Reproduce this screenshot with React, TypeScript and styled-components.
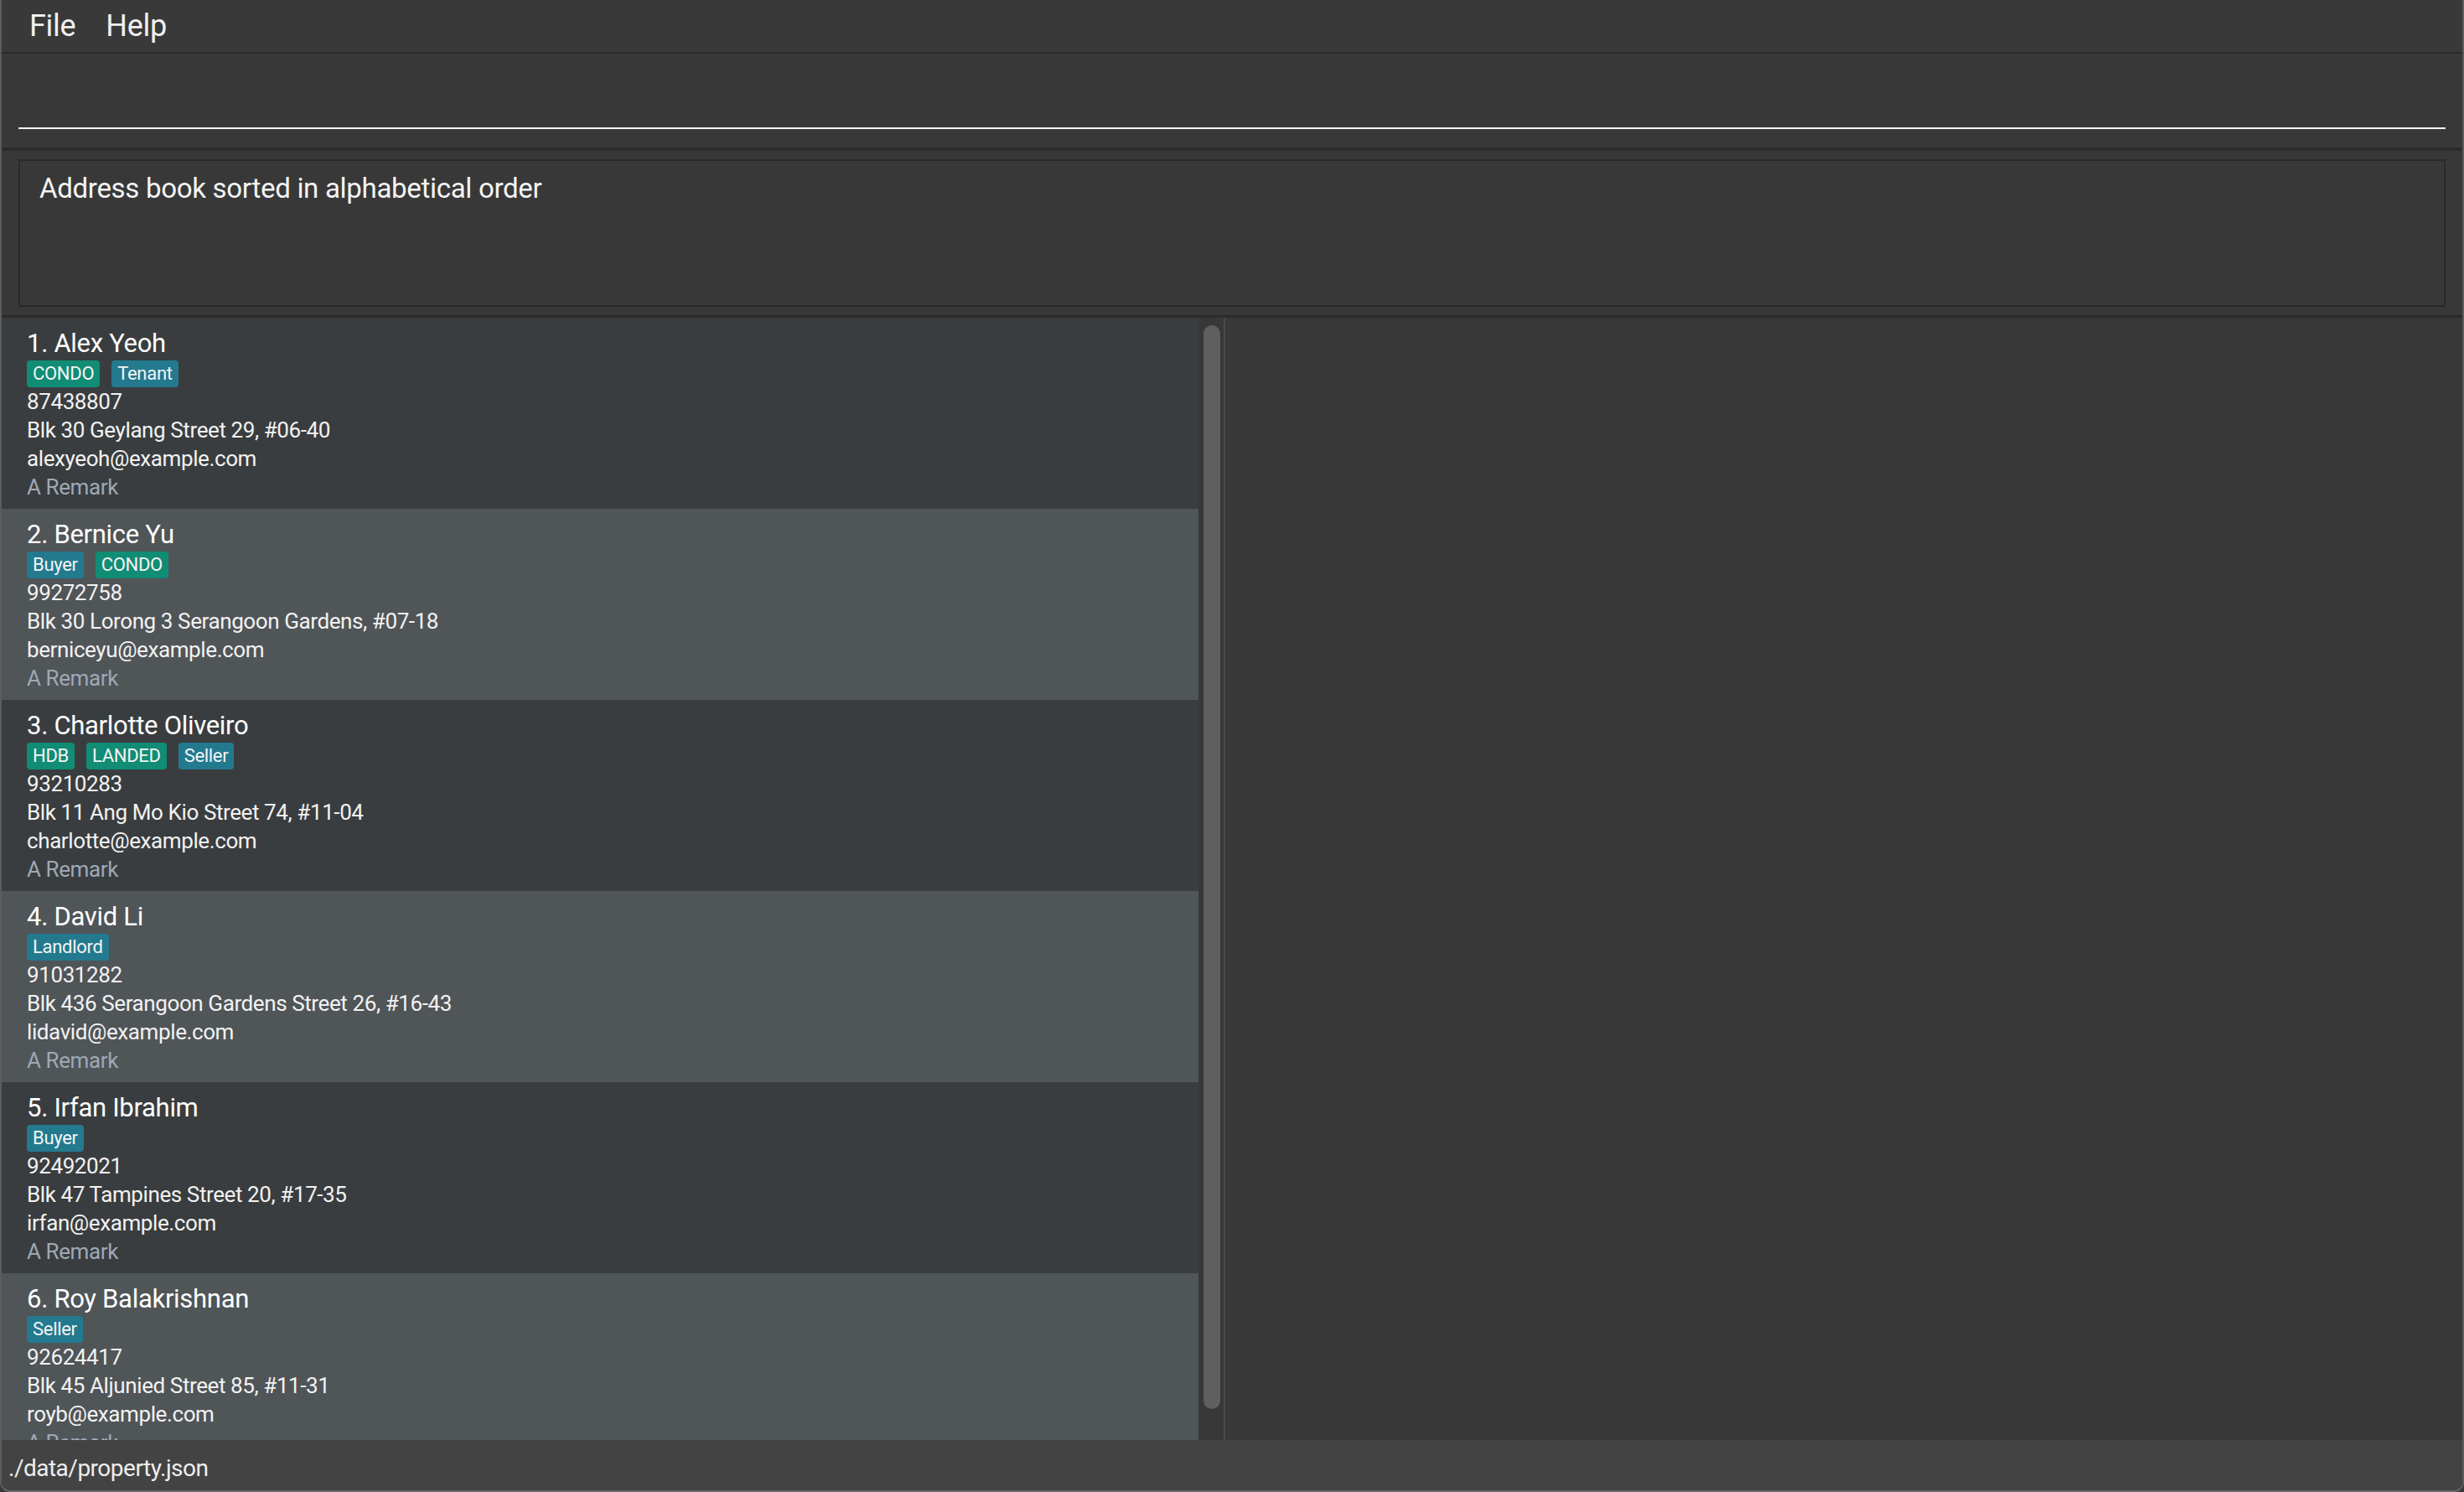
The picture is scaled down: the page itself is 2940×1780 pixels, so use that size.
import { createGlobalStyle, styled } from 'styled-components'

type TagKind = 'property' | 'role'

interface Person {
    name: string
    tags: { label: string; kind: TagKind }[]
    phone: string
    address: string
    email: string
    remark: string
}

const people: Person[] = [
    {
        name: 'Alex Yeoh',
        tags: [{ label: 'CONDO', kind: 'property' }, { label: 'Tenant', kind: 'role' }],
        phone: '87438807',
        address: 'Blk 30 Geylang Street 29, #06-40',
        email: 'alexyeoh@example.com',
        remark: 'A Remark',
    },
    {
        name: 'Bernice Yu',
        tags: [{ label: 'Buyer', kind: 'role' }, { label: 'CONDO', kind: 'property' }],
        phone: '99272758',
        address: 'Blk 30 Lorong 3 Serangoon Gardens, #07-18',
        email: 'berniceyu@example.com',
        remark: 'A Remark',
    },
    {
        name: 'Charlotte Oliveiro',
        tags: [
            { label: 'HDB', kind: 'property' },
            { label: 'LANDED', kind: 'property' },
            { label: 'Seller', kind: 'role' },
        ],
        phone: '93210283',
        address: 'Blk 11 Ang Mo Kio Street 74, #11-04',
        email: 'charlotte@example.com',
        remark: 'A Remark',
    },
    {
        name: 'David Li',
        tags: [{ label: 'Landlord', kind: 'role' }],
        phone: '91031282',
        address: 'Blk 436 Serangoon Gardens Street 26, #16-43',
        email: 'lidavid@example.com',
        remark: 'A Remark',
    },
    {
        name: 'Irfan Ibrahim',
        tags: [{ label: 'Buyer', kind: 'role' }],
        phone: '92492021',
        address: 'Blk 47 Tampines Street 20, #17-35',
        email: 'irfan@example.com',
        remark: 'A Remark',
    },
    {
        name: 'Roy Balakrishnan',
        tags: [{ label: 'Seller', kind: 'role' }],
        phone: '92624417',
        address: 'Blk 45 Aljunied Street 85, #11-31',
        email: 'royb@example.com',
        remark: 'A Remark',
    },
]

export default function App() {
    return (
        <>
            <GlobalStyle />
            <Window>
                <MenuBar>
                    <MenuItem>File</MenuItem>
                    <MenuItem>Help</MenuItem>
                </MenuBar>

                <CommandSection>
                    <CommandInput type="text" defaultValue="" />
                </CommandSection>

                <ResultSection>
                    <ResultBox>Address book sorted in alphabetical order</ResultBox>
                </ResultSection>

                <Main>
                    <ListPanel>
                        <CardList>
                            {people.map((person, i) => (
                                <Card key={person.name} $even={i % 2 === 1}>
                                    <Name>{i + 1}. {person.name}</Name>
                                    <Tags>
                                        {person.tags.map(tag => (
                                            <Tag key={tag.label} $kind={tag.kind}>{tag.label}</Tag>
                                        ))}
                                    </Tags>
                                    <Field>{person.phone}</Field>
                                    <Field>{person.address}</Field>
                                    <Field>{person.email}</Field>
                                    <Remark>{person.remark}</Remark>
                                </Card>
                            ))}
                        </CardList>
                        <ScrollTrack>
                            <ScrollThumb />
                        </ScrollTrack>
                    </ListPanel>
                    <DetailPanel />
                </Main>

                <StatusBar>./data/property.json</StatusBar>
            </Window>
        </>
    )
}

const GlobalStyle = createGlobalStyle`
    html, body {
        margin: 0;
        padding: 0;
        background: #383838;
        overflow: hidden;
    }
    * {
        box-sizing: border-box;
    }
`

const Window = styled.div`
    width: 2940px;
    height: 1780px;
    display: flex;
    flex-direction: column;
    background: #383838;
    border-left: 2px solid #5c5c5c;
    border-right: 2px solid #5c5c5c;
    border-bottom: 2px solid #6a6a6a;
    border-radius: 0 0 12px 12px;
    overflow: hidden;
    font-family: Roboto, "Liberation Sans", sans-serif;
    color: #ffffff;
`

const MenuBar = styled.div`
    height: 64px;
    flex-shrink: 0;
    display: flex;
    align-items: center;
    padding-left: 15px;
    background: #393939;
    border-bottom: 2px solid #2b2b2b;
`

const MenuItem = styled.div`
    padding: 0 18px;
    font-size: 36px;
    color: #f0f0f0;
    letter-spacing: -0.3px;
`

const CommandSection = styled.div`
    height: 116px;
    flex-shrink: 0;
    padding: 24px 20px 0;
    background: #383838;
    border-bottom: 4px solid #2b2b2b;
`

const CommandInput = styled.input`
    display: block;
    width: 100%;
    height: 66px;
    background: transparent;
    border: none;
    border-bottom: 2px solid #ffffff;
    outline: none;
    color: #ffffff;
    font-family: inherit;
    font-size: 33px;
    padding: 0 4px;
`

const ResultSection = styled.div`
    height: 199px;
    flex-shrink: 0;
    padding: 10px 20px 0;
    border-bottom: 3px solid #2b2b2b;
`

const ResultBox = styled.div`
    height: 176px;
    border: 2px solid #2a2a2a;
    padding: 13px 23px;
    font-size: 33px;
    letter-spacing: -0.3px;
    color: #f4f4f4;
`

const Main = styled.div`
    flex: 1;
    min-height: 0;
    display: flex;
`

const ListPanel = styled.div`
    width: 1460px;
    flex-shrink: 0;
    display: flex;
    border-right: 2px solid #4a4a4a;
`

const CardList = styled.div`
    width: 1428px;
    display: flex;
    flex-direction: column;
    overflow: hidden;
`

const Card = styled.div<{ $even: boolean }>`
    flex-shrink: 0;
    padding: 11px 30px 9px;
    background: ${p => (p.$even ? '#505558' : '#3a3d3f')};
`

const Name = styled.div`
    font-size: 31px;
    line-height: 40px;
    letter-spacing: -0.3px;
    color: #ffffff;
`

const Tags = styled.div`
    display: flex;
    gap: 14px;
`

const Tag = styled.span<{ $kind: TagKind }>`
    height: 32px;
    line-height: 32px;
    padding: 0 7px;
    border-radius: 4px;
    font-size: 22px;
    letter-spacing: -0.3px;
    color: #f4f4f4;
    background: ${p => (p.$kind === 'property' ? '#118c75' : '#237a8f')};
`

const Field = styled.div`
    font-size: 26px;
    line-height: 34px;
    letter-spacing: -0.4px;
    color: #f2f2f2;
`

const Remark = styled(Field)`
    color: #9ea9b5;
`

const ScrollTrack = styled.div`
    width: 30px;
    padding: 9px 4px 0 6px;
    background: #383838;
`

const ScrollThumb = styled.div`
    width: 20px;
    height: 1293px;
    border-radius: 10px;
    background: #5f5f5f;
`

const DetailPanel = styled.div`
    flex: 1;
    background: #383838;
`

const StatusBar = styled.div`
    height: 60px;
    flex-shrink: 0;
    padding: 16px 8px 0;
    background: #434343;
    font-size: 28px;
    line-height: 36px;
    letter-spacing: -0.5px;
    color: #eeeeee;
`
